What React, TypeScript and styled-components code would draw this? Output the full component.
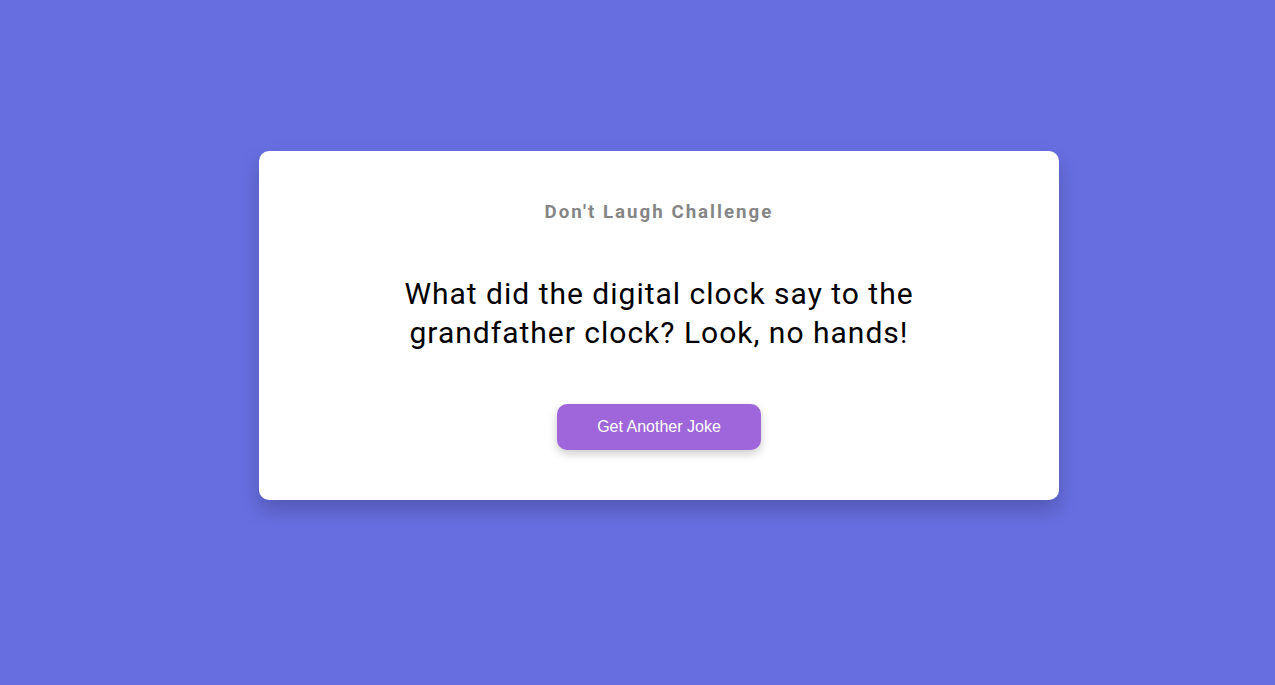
import React from "react";
import styled, { createGlobalStyle } from "styled-components";

const GlobalStyle = createGlobalStyle`
  html, body {
    margin: 0;
    padding: 0;
    background: #676ee0;
    font-family: Roboto, "Liberation Sans", sans-serif;
  }
`;

const Page = styled.div`
  min-height: 100vh;
  box-sizing: border-box;
  display: flex;
  justify-content: center;
  align-items: flex-start;
  padding-top: 151px;
  padding-left: 43px;
`;

const Card = styled.div`
  width: 800px;
  box-sizing: border-box;
  background: #ffffff;
  border-radius: 10px;
  padding: 50px 40px 50px;
  display: flex;
  flex-direction: column;
  align-items: center;
  text-align: center;
  box-shadow: 0 10px 20px rgba(0, 0, 0, 0.2);
`;

const Title = styled.h3`
  margin: 0 0 51px;
  font-family: Roboto, sans-serif;
  font-size: 18.72px;
  font-weight: 700;
  letter-spacing: 2px;
  color: #858585;
`;

const Joke = styled.p`
  margin: 0 0 52px;
  max-width: 560px;
  font-family: Roboto, sans-serif;
  font-size: 30px;
  line-height: 39px;
  font-weight: 400;
  letter-spacing: 1px;
  color: #000000;
`;

const Button = styled.button`
  border: none;
  border-radius: 10px;
  background: #9f66dc;
  color: #ffffff;
  font-family: "Liberation Sans", Arial, sans-serif;
  font-size: 16px;
  padding: 14px 40px;
  cursor: pointer;
  box-shadow: 0 4px 10px rgba(0, 0, 0, 0.2);
`;

export default function App() {
  return (
    <>
      <GlobalStyle />
      <Page>
        <Card>
          <Title>Don't Laugh Challenge</Title>
          <Joke>What did the digital clock say to the grandfather clock? Look, no hands!</Joke>
          <Button>Get Another Joke</Button>
        </Card>
      </Page>
    </>
  );
}
